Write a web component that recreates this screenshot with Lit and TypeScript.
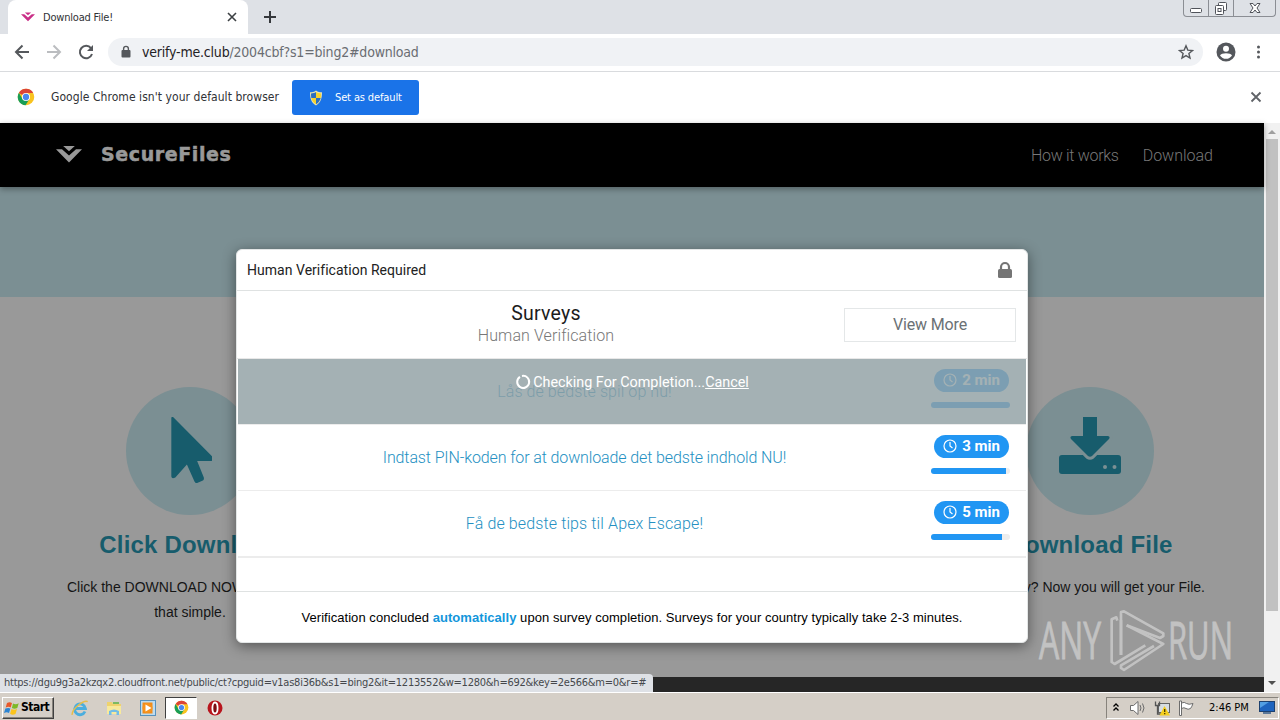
import { css, html, LitElement, svg } from "lit";
import { customElement, property } from "lit/decorators.js";

const chromeLogo = svg`
  <circle cx="12" cy="12" r="11" fill="#f9c31f" />
  <path d="M12 12 2.5 6.5A11 11 0 0 1 21.6 6.6H12Z" fill="#dc4437" />
  <path d="M2.5 6.4A11 11 0 0 0 11.4 23L16.6 14.6 12 12 7.3 14.6Z" fill="#189e57" />
  <circle cx="12" cy="12" r="5.4" fill="#fff" />
  <circle cx="12" cy="12" r="4.2" fill="#4a87ee" />
`;

const secureLogo = svg`
  <path d="M0 3.2h6l7 6.4 7-6.4h6L13 16.4Z" />
  <path d="M7.2 0h11.6L13 5.2Z" />
`;

@customElement("browser-chrome")
export class BrowserChrome extends LitElement {
  static styles = css`
    :host {
      display: block;
      font-family: "DejaVu Sans Condensed", "DejaVu Sans", sans-serif;
      font-stretch: condensed;
      color: #303236;
      white-space: nowrap;
    }

    svg {
      display: block;
      flex: none;
    }

    .tabs {
      height: 34px;
      background: #dee1e6;
      display: flex;
      align-items: flex-start;
    }

    .tab {
      box-sizing: border-box;
      width: 240px;
      height: 34px;
      margin-left: 8px;
      padding: 0 10px 0 13px;
      border-radius: 8px 8px 0 0;
      background: #fff;
      display: flex;
      align-items: center;
      font-size: 11px;
    }

    .tab-title {
      flex: 1;
      margin-left: 8px;
      letter-spacing: -0.2px;
    }

    .plus {
      margin: 10px 0 0 15px;
    }

    .window-buttons {
      box-sizing: border-box;
      width: 93px;
      height: 17px;
      margin: 0 4px 0 auto;
      border: 1px solid #8b8e94;
      border-top: 0;
      border-radius: 0 0 4px 4px;
      display: flex;
    }

    .window-buttons span {
      width: 24px;
      border-right: 1px solid #8b8e94;
      display: flex;
      justify-content: center;
    }

    .window-buttons span:last-child {
      flex: 1;
      border: 0;
    }

    .toolbar {
      box-sizing: border-box;
      height: 38px;
      padding: 0 11px 1px 14px;
      border-bottom: 1px solid #d9dbde;
      background: #fff;
      display: flex;
      align-items: center;
    }

    .nav {
      display: flex;
      gap: 16px;
    }

    .address {
      box-sizing: border-box;
      width: 1095px;
      height: 28px;
      margin-left: 14px;
      padding: 0 9px 0 12px;
      border-radius: 14px;
      background: #f0f2f5;
      display: flex;
      align-items: center;
      font-size: 14px;
    }

    .url {
      flex: 1;
      margin-left: 10px;
      color: #6a6d72;
      letter-spacing: -0.2px;
    }

    .url b {
      font-weight: normal;
      color: #1f2124;
    }

    .profile {
      margin-left: 13px;
    }

    .dots {
      margin-left: 12px;
    }

    .infobar {
      box-sizing: border-box;
      height: 51px;
      padding: 0 16px 0 17px;
      background: #fff;
      display: flex;
      align-items: center;
      font-size: 12px;
    }

    .infobar > svg {
      margin-bottom: 2px;
    }

    .message {
      margin-left: 16px;
      padding-bottom: 2px;
      width: 241px;
      letter-spacing: 0.06px;
    }

    .set-default {
      box-sizing: border-box;
      width: 127px;
      height: 35px;
      padding-left: 16px;
      border-radius: 3px;
      background: #1a73e8;
      color: #fff;
      font-size: 11px;
      letter-spacing: -0.13px;
      display: flex;
      align-items: center;
      gap: 11px;
    }

    .dismiss {
      margin-left: auto;
    }
  `;

  render() {
    return html`
      <div class="tabs">
        <div class="tab">
          <svg width="14" height="10" viewBox="0 0 26 17" fill="#c92f87">${secureLogo}</svg>
          <span class="tab-title">Download File!</span>
          <svg width="12" height="12" viewBox="0 0 12 12" stroke="#3c4043" stroke-width="1.6">
            <path d="M2 2l8 8M10 2l-8 8" />
          </svg>
        </div>
        <svg class="plus" width="14" height="14" viewBox="0 0 14 14" stroke="#35383c" stroke-width="2">
          <path d="M7 1v12M1 7h12" />
        </svg>
        <div class="window-buttons">
          <span>
            <svg width="14" height="16" viewBox="0 0 14 16" fill="#fff" stroke="#50535a">
              <rect x="1.5" y="8.5" width="11" height="4" rx="1" />
            </svg>
          </span>
          <span>
            <svg width="14" height="16" viewBox="0 0 14 16" fill="#fff" stroke="#50535a">
              <rect x="4.5" y="2.5" width="8" height="8" rx="1" />
              <rect x="1.5" y="5.5" width="8" height="9" rx="1" />
              <rect x="4" y="8.5" width="3" height="3" />
            </svg>
          </span>
          <span>
            <svg width="14" height="16" viewBox="0 0 14 16" fill="#fff" stroke="#50535a">
              <path d="M2 3.5h3l2 2.500 2-2.500h3L9 8l3 4.500H9L7 10l-2 2.500H2L5 8Z" />
            </svg>
          </span>
        </div>
      </div>

      <div class="toolbar">
        <div class="nav">
          <svg width="16" height="16" viewBox="0 0 16 16" fill="none" stroke="#55585c" stroke-width="2">
            <path d="M15 8H2M8.500 1.500 2 8l6.500 6.500" />
          </svg>
          <svg width="16" height="16" viewBox="0 0 16 16" fill="none" stroke="#bbbdc0" stroke-width="2">
            <path d="M1 8h13M7.500 1.500 14 8l-6.500 6.500" />
          </svg>
          <svg width="16" height="16" viewBox="0 0 16 16">
            <path d="M13 4.200A6.200 6.200 0 1 0 14 10" fill="none" stroke="#55585c" stroke-width="2" />
            <path d="M15 1v6H9Z" fill="#55585c" />
          </svg>
        </div>
        <div class="address">
          <svg width="12" height="14" viewBox="0 0 12 14">
            <rect x="1.500" y="5" width="9" height="7.500" rx="1" fill="#55585c" />
            <path d="M3.600 6V3.800a2.400 2.400 0 0 1 4.800 0V6" fill="none" stroke="#55585c" stroke-width="1.400" />
          </svg>
          <span class="url"><b>verify-me.club</b>/2004cbf?s1=bing2#download</span>
          <svg width="16" height="16" viewBox="0 0 16 16" fill="none" stroke="#55585c" stroke-width="1.400">
            <path d="M8 1.800l1.800 4.300 4.700.4-3.600 3 1.100 4.600L8 11.600l-4 2.500 1.100-4.600-3.600-3 4.700-.4Z" />
          </svg>
        </div>
        <svg class="profile" width="20" height="20" viewBox="0 0 20 20">
          <circle cx="10" cy="10" r="9.500" fill="#54575c" />
          <circle cx="10" cy="6.800" r="3" fill="#fff" />
          <path d="M4 13.600c1.300-3.200 10.700-3.200 12 0a7.200 7.200 0 0 1-12 0Z" fill="#fff" />
        </svg>
        <svg class="dots" width="20" height="16" viewBox="0 0 20 16" fill="#55585c">
          <circle cx="10.500" cy="3" r="1.500" />
          <circle cx="10.500" cy="8" r="1.500" />
          <circle cx="10.500" cy="13" r="1.500" />
        </svg>
      </div>

      <div class="infobar">
        <svg width="18" height="18" viewBox="0 0 24 24">${chromeLogo}</svg>
        <span class="message">Google Chrome isn't your default browser</span>
        <div class="set-default">
          <svg width="16" height="16" viewBox="0 0 16 16">
            <path d="M8 .5c2 1.500 4 1.800 6 1.800 0 6-1.200 10.500-6 13.200C3.200 12.800 2 8.300 2 2.300c2 0 4-.3 6-1.800Z" fill="#e9e3b0" />
            <path d="M8 2v6H3.300C3 6.500 3 5 3 3.400 5 3.300 6.500 3 8 2Z" fill="#2d6fc0" />
            <path d="M8 2v6h4.700c.3-1.500.3-3 .3-4.600C11 3.300 9.500 3 8 2Z" fill="#f7d32e" />
            <path d="M8 8v6.300C5.300 12.700 3.900 10.600 3.300 8Z" fill="#f7d32e" />
            <path d="M8 8v6.300c2.700-1.600 4.100-3.700 4.700-6.300Z" fill="#2d6fc0" />
          </svg>
          <span>Set as default</span>
        </div>
        <svg class="dismiss" width="16" height="16" viewBox="0 0 16 16" stroke="#606368" stroke-width="1.800">
          <path d="M3.500 3.500l9 9M12.500 3.500l-9 9" />
        </svg>
      </div>
    `;
  }
}

@customElement("offer-row")
export class OfferRow extends LitElement {
  @property() label = "";
  @property({ type: Number }) tracking = 0;
  @property({ type: Number }) minutes = 0;
  @property({ type: Number }) progress = 100;
  @property({ type: Boolean }) checking = false;

  static styles = css`
    :host {
      box-sizing: border-box;
      position: relative;
      height: 66px;
      padding: 10px 16px 0 0;
      border-bottom: 1px solid #ececec;
      display: flex;
      color: #2490c2;
    }

    :host(:last-child) {
      height: 67px;
      border-bottom-width: 2px;
    }

    .label {
      flex: 1;
      padding-top: 13px;
      text-align: center;
      font-size: 16px;
      line-height: 20px;
      font-weight: 300;
      white-space: nowrap;
    }

    .time {
      width: 79px;
      display: flex;
      flex-direction: column;
      align-items: center;
      gap: 10px;
    }

    .badge {
      width: 75px;
      height: 23px;
      border-radius: 12px;
      background: #2196f3;
      color: #fff;
      font-size: 15px;
      line-height: 20px;
      font-weight: 700;
      display: flex;
      align-items: center;
      justify-content: center;
      gap: 5px;
      margin-left: 2px;
      white-space: nowrap;
    }

    .badge span {
      padding-bottom: 2px;
    }

    .badge svg {
      margin-bottom: 2px;
    }

    .track {
      width: 79px;
      height: 6px;
      border-radius: 3px;
      background: #ededed;
      overflow: hidden;
    }

    .bar {
      height: 6px;
      background: #2196f3;
    }

    .overlay {
      position: absolute;
      inset: 0;
      background: rgba(144, 160, 163, 0.82);
      color: #fff;
      font-size: 14.4px;
      line-height: 18px;
      letter-spacing: -0.02px;
      padding-top: 15px;
      display: flex;
      justify-content: center;
      gap: 2px;
      white-space: nowrap;
    }

    .overlay svg {
      margin-top: -1px;
    }

    .overlay u {
      text-underline-offset: 1px;
    }
  `;

  render() {
    return html`
      <div class="label" style="letter-spacing: ${this.tracking}px">${this.label}</div>
      <div class="time">
        <div class="badge">
          <svg width="14" height="14" viewBox="0 0 14 14" fill="none" stroke="#fff" stroke-width="1.200">
            <circle cx="7" cy="7" r="6" />
            <path d="M7 3v4l2.500 2" />
          </svg>
          <span>${this.minutes} min</span>
        </div>
        <div class="track">
          <div class="bar" style="width: ${this.progress}%"></div>
        </div>
      </div>
      ${this.checking
        ? html`
            <div class="overlay">
              <svg width="16" height="18" viewBox="0 0 16 18" fill="none" stroke="#fff" stroke-width="2">
                <path d="M5 3.800A6 6 0 1 0 7 3" />
              </svg>
              <span>Checking For Completion...<u>Cancel</u></span>
            </div>
          `
        : ""}
    `;
  }
}

@customElement("verify-modal")
export class VerifyModal extends LitElement {
  static styles = css`
    :host {
      box-sizing: border-box;
      width: 792px;
      height: 394px;
      border: 1px solid #e3e6e6;
      border-radius: 6px;
      background: #fff;
      box-shadow: 0 3px 14px rgba(0, 0, 0, 0.45);
      font-family: Roboto, "Liberation Sans", sans-serif;
      color: #222;
      display: flex;
      flex-direction: column;
      white-space: nowrap;
    }

    .title {
      height: 40px;
      padding: 0 14px 0 10px;
      border-bottom: 1px solid #dfe2e2;
      display: flex;
      align-items: center;
      justify-content: space-between;
      font-size: 14px;
      letter-spacing: 0.03px;
    }

    .intro {
      box-sizing: border-box;
      height: 68px;
      padding: 12px 11px 0 0;
      border-bottom: 1px solid #e8e8e8;
      display: flex;
    }

    .heading {
      flex: 1;
      padding-left: 11px;
      text-align: center;
    }

    .heading h2 {
      margin: 0;
      font-size: 19.5px;
      line-height: 22px;
      font-weight: 400;
      letter-spacing: 0.2px;
      color: #1c1c1c;
    }

    .heading p {
      margin: 0;
      font-size: 16px;
      line-height: 22px;
      font-weight: 300;
      letter-spacing: 0.1px;
      color: #777;
    }

    .more {
      box-sizing: border-box;
      width: 172px;
      height: 34px;
      margin-top: 5px;
      border: 1px solid #e4e7e8;
      color: #6b7175;
      font-size: 16px;
      line-height: 31px;
      letter-spacing: -0.15px;
      text-align: center;
    }

    .offers {
      height: 233px;
      box-sizing: border-box;
      padding: 0 1px;
      border-bottom: 1px solid #dfe2e2;
    }

    .footer {
      flex: 1;
      display: flex;
      align-items: center;
      justify-content: center;
      font-family: "Liberation Sans", sans-serif;
      font-size: 13px;
      letter-spacing: 0.05px;
      color: #000;
    }

    .footer b {
      color: #1296db;
    }
  `;

  render() {
    return html`
      <div class="title">
        <span>Human Verification Required</span>
        <svg width="16" height="18" viewBox="0 0 16 18">
          <rect x="1" y="8" width="14" height="9" rx="1.500" fill="#757575" />
          <path d="M4 9V6a4 4 0 0 1 8 0v3" fill="none" stroke="#757575" stroke-width="2.200" />
        </svg>
      </div>
      <div class="intro">
        <div class="heading">
          <h2>Surveys</h2>
          <p>Human Verification</p>
        </div>
        <div class="more">View More</div>
      </div>
      <div class="offers">
        <offer-row label="Lås de bedste spil op nu!" tracking="0.08" minutes="2" progress="100" checking></offer-row>
        <offer-row
          label="Indtast PIN-koden for at downloade det bedste indhold NU!"
          tracking="-0.12"
          minutes="3"
          progress="95"
        ></offer-row>
        <offer-row label="Få de bedste tips til Apex Escape!" tracking="0.12" minutes="5" progress="90"></offer-row>
      </div>
      <div class="footer">
        <span>
          Verification concluded <b>automatically</b> upon survey completion. Surveys for your
          country typically take 2-3 minutes.
        </span>
      </div>
    `;
  }
}

@customElement("win-taskbar")
export class WinTaskbar extends LitElement {
  static styles = css`
    :host {
      box-sizing: border-box;
      height: 28px;
      padding: 3px 1px 1px 2px;
      border-top: 1px solid #fff;
      background: #d5cfc7;
      display: flex;
      align-items: center;
      font-family: "DejaVu Sans Condensed", "DejaVu Sans", sans-serif;
      font-stretch: condensed;
      font-size: 11px;
      color: #000;
      white-space: nowrap;
    }

    .start {
      box-sizing: border-box;
      width: 52px;
      height: 22px;
      padding-left: 1px;
      border: 1px solid;
      border-color: #fff #404040 #404040 #fff;
      box-shadow: inset -1px -1px #87837c;
      display: flex;
      align-items: center;
      font-weight: bold;
      font-size: 12px;
    }

    .start span {
      letter-spacing: -0.5px;
      line-height: 18px;
      padding: 0 0 1px 1px;
    }

    .apps {
      margin-left: 16px;
      display: flex;
      align-items: center;
    }

    .app {
      width: 20px;
      margin-right: 14px;
      display: flex;
      justify-content: center;
    }

    .active {
      box-sizing: border-box;
      width: 32px;
      height: 22px;
      margin: 0 8px 0 -7px;
      border: 1px solid;
      border-color: #404040 #fff #fff #404040;
      background: #fff;
      display: flex;
      align-items: center;
      justify-content: center;
    }

    .tray {
      box-sizing: border-box;
      width: 173px;
      height: 22px;
      margin-left: auto;
      padding: 0 3px 0 4px;
      border: 1px solid;
      border-color: #87837c #fff #fff #87837c;
      display: flex;
      align-items: center;
    }

    .tray svg {
      flex: none;
      margin-right: 7.5px;
    }

    .clock {
      margin-left: 8px;
      flex: 1;
    }

    .tray svg.desktop {
      margin-right: 0;
    }
  `;

  render() {
    return html`
      <div class="start">
        <svg width="16" height="16" viewBox="0 0 16 16">
          <path d="M3 3c2-1.300 3.500-1 5 0L6.700 7.500c-1.500-.9-3-.9-5 0Z" fill="#e8592b" />
          <path d="M9 3.500c1.700.9 3.500.9 5.700-.2L13.300 8c-2 1-3.800.9-5.400 0Z" fill="#7db928" />
          <path d="M1.400 8.600c2-.9 3.500-.9 5 0L5 13c-1.500-.9-3-.9-5 0Z" fill="#2b84d3" />
          <path d="M7.500 9.100c1.700.9 3.500.9 5.500 0L11.500 14c-2 .9-3.700.9-5.400-.3Z" fill="#fbc41c" />
        </svg>
        <span>Start</span>
      </div>
      <div class="apps">
        <div class="app">
          <svg width="18" height="18" viewBox="0 0 18 18" fill="none">
            <path d="M14 12.500A5.400 5.400 0 1 1 14.400 9.500H5" stroke="#4baede" stroke-width="2.800" />
            <path d="M1.200 15.800C.5 10 13 .5 16.700 2.700" stroke="#e7bd49" stroke-width="1.500" />
          </svg>
        </div>
        <div class="app">
          <svg width="18" height="18" viewBox="0 0 18 18">
            <path d="M2 3h5l1 2h8v6H2Z" fill="#efd36d" />
            <path d="M2 7h14v8H2Z" fill="#f8e99c" />
            <path d="M4 16v-4q5-3 10 0v4h-2.500v-3h-5v3Z" fill="#72bde6" />
            <path d="M8 3h6v2H8Z" fill="#7cba62" />
          </svg>
        </div>
        <div class="app">
          <svg width="18" height="18" viewBox="0 0 18 18">
            <rect x="1.500" y="1.500" width="15" height="15" fill="#bcdcf1" stroke="#5792bd" />
            <rect x="3.500" y="3.500" width="10" height="11" fill="#f28b18" />
            <circle cx="8.500" cy="9" r="5" fill="#f5931f" />
            <path d="M6.500 5.500v7l6-3.500Z" fill="#fff" />
          </svg>
        </div>
        <div class="active">
          <svg width="15" height="15" viewBox="0 0 24 24">${chromeLogo}</svg>
        </div>
        <div class="app">
          <svg width="16" height="16" viewBox="0 0 16 16">
            <circle cx="8" cy="8" r="7.500" fill="#b8151d" />
            <ellipse cx="8" cy="8" rx="2.600" ry="5.500" fill="#7e0c12" stroke="#fff" stroke-width="1.800" />
          </svg>
        </div>
      </div>
      <div class="tray">
        <svg width="10" height="12" viewBox="0 0 10 12" fill="none" stroke="#000" stroke-width="1.300">
          <path d="M2.500 4.500 5 2l2.500 2.500M2.500 8.500 5 6l2.500 2.500" />
        </svg>
        <svg width="18" height="16" viewBox="0 0 18 16" fill="#fff" stroke="#6c6c6c">
          <path d="M1.500 5.500h3L9 1.500v13l-4.500-4h-3Z" />
          <path d="M11 5q2 3 0 6M13.500 3.500q3 4.500 0 9" fill="none" />
        </svg>
        <svg width="16" height="16" viewBox="0 0 16 16">
          <rect x="4.500" y="3.500" width="11" height="9" fill="#d7dde2" stroke="#636363" />
          <path d="M1.500 1.500v4h4v-4M3.500 5v9h5" fill="none" stroke="#555" stroke-width="1.300" />
          <path d="M10.500 6 16 15.500H5.500Z" fill="#f5ce1c" />
          <path d="M10.700 9v3M10.700 13v1.300" stroke="#433500" stroke-width="1.300" />
        </svg>
        <svg width="16" height="16" viewBox="0 0 16 16" fill="#fff" stroke="#6c6c6c">
          <path d="M1.500 1v14.500h2V1ZM3.500 3q3-1.500 5 .5 2 1.500 6.500 0-1 3-2.500 5-2.500 1.500-4.500 0t-4.500 0" />
        </svg>
        <span class="clock">2:46 PM</span>
        <svg class="desktop" width="16" height="15" viewBox="0 0 16 15">
          <rect x=".5" y="1.500" width="15" height="10" fill="#1e64be" stroke="#1d416f" />
          <path d="M1 2h9L1 8Z" fill="#529fe3" />
          <path d="M4 12h8v2H4Z" fill="#5c7899" />
        </svg>
      </div>
    `;
  }
}

@customElement("app-root")
export class AppRoot extends LitElement {
  static styles = css`
    :host {
      position: relative;
      display: flex;
      flex-direction: column;
      width: 1280px;
      height: 720px;
      overflow: hidden;
      background: #fff;
      font-family: "Liberation Sans", Arial, sans-serif;
    }

    .viewport {
      height: 569px;
      display: flex;
    }

    .page {
      width: 1264px;
      background: #999;
      display: flex;
      flex-direction: column;
      white-space: nowrap;
    }

    .header {
      box-sizing: border-box;
      height: 64px;
      padding: 0 51px 0 56px;
      background: #000;
      box-shadow: 0 2px 6px rgba(0, 0, 0, 0.35);
      display: flex;
      align-items: center;
      color: #787878;
      font-family: Roboto, sans-serif;
      font-weight: 300;
      font-size: 16px;
      z-index: 1;
    }

    .header svg {
      margin-bottom: 2px;
    }

    .brand {
      flex: 1;
      margin-left: 19px;
      padding-bottom: 2px;
      color: #999;
      font-family: "DejaVu Sans", sans-serif;
      font-weight: 700;
      font-size: 19px;
      letter-spacing: 0.6px;
      -webkit-text-stroke: 0.5px #999;
    }

    .links {
      display: flex;
      gap: 24px;
    }

    .links span:first-child {
      letter-spacing: -0.3px;
    }

    .hero {
      height: 110px;
      background: #7b8f93;
    }

    .steps {
      flex: 1;
      padding: 90px 59px 0 67px;
      display: flex;
      justify-content: space-between;
    }

    .step {
      width: 246px;
      display: flex;
      flex-direction: column;
      align-items: center;
      color: #151515;
      font-size: 14px;
      line-height: 25px;
    }

    .step:last-child {
      width: 230px;
    }

    .disc {
      width: 128px;
      height: 128px;
      border-radius: 50%;
      background: #7b8f93;
      display: flex;
      align-items: center;
      justify-content: center;
    }

    .step h3 {
      margin: 15px 0;
      color: #175c6c;
      font-size: 24px;
      line-height: 30px;
      letter-spacing: 0.2px;
    }

    .first-line {
      align-self: flex-start;
    }

    .last-line {
      align-self: flex-end;
    }

    .page-footer {
      height: 15px;
      background: #262626;
    }

    .scrollbar {
      width: 16px;
      background: #f1f1f1;
      display: flex;
      flex-direction: column;
      align-items: center;
    }

    .thumb {
      width: 12px;
      height: 472px;
      margin-bottom: auto;
      background: #c1c1c1;
    }

    .modal {
      position: absolute;
      left: 236px;
      top: 249px;
    }

    .status {
      position: absolute;
      left: 0;
      top: 674px;
      box-sizing: border-box;
      width: 653px;
      height: 18px;
      padding-left: 4px;
      border-radius: 0 4px 0 0;
      background: #dee1e6;
      color: #45484c;
      font-family: "DejaVu Sans Condensed", "DejaVu Sans", sans-serif;
      font-stretch: condensed;
      font-size: 11px;
      line-height: 18px;
      letter-spacing: -0.235px;
      white-space: nowrap;
    }

    .watermark {
      position: absolute;
      left: 1036px;
      top: 598px;
      opacity: 0.62;
    }

    .watermark text {
      font-family: "Open Sans", sans-serif;
      font-weight: 400;
      font-size: 52px;
    }
  `;

  render() {
    return html`
      <browser-chrome></browser-chrome>

      <div class="viewport">
        <div class="page">
          <div class="header">
            <svg width="26" height="17" viewBox="0 0 26 17" fill="#999">${secureLogo}</svg>
            <span class="brand">SecureFiles</span>
            <div class="links">
              <span>How it works</span>
              <span>Download</span>
            </div>
          </div>
          <div class="hero"></div>
          <div class="steps">
            <div class="step">
              <div class="disc">
                <svg width="44" height="68" viewBox="0 0 44 68" fill="#175c6c">
                  <path
                    d="M4 1.500 48 41q2.500 3-2 4H30.500l7.500 16.500q.5 2-1 3l-6.500 2.500q-2 .5-3-1.500L19 48.500 6 61.500q-4 2-4.500-1V2q.5-2.500 2.500-.5Z"
                    transform="translate(2 -1) scale(.89 1)"
                  />
                </svg>
              </div>
              <h3>Click Download</h3>
              <span class="first-line">Click the DOWNLOAD NOW</span>
              <span>that simple.</span>
            </div>
            <div class="step">
              <div class="disc">
                <svg width="62" height="68" viewBox="0 5 62 68" fill="#175c6c">
                  <path d="M3 43h56q3 0 3 3v13q0 3-3 3H3q-3 0-3-3V46q0-3 3-3Z" />
                  <path
                    d="M24 5h14v19h11q2.500.5 1 3L33 44q-2 1.500-4 0L12 27q-1.500-2.500 1-3h11Z"
                    stroke="#7b8f93"
                    stroke-width="6"
                    paint-order="stroke"
                  />
                  <circle cx="46" cy="55" r="2" fill="#7b8f93" />
                  <circle cx="55.500" cy="55" r="2" fill="#7b8f93" />
                </svg>
              </div>
              <h3>Download File</h3>
              <span class="last-line">y? Now you will get your File.</span>
            </div>
          </div>
          <div class="page-footer"></div>
        </div>
        <div class="scrollbar">
          <svg width="16" height="16" viewBox="0 0 16 16" fill="#a0a0a0"><path d="M4 11l4-4 4 4Z" /></svg>
          <div class="thumb"></div>
          <svg width="16" height="17" viewBox="0 0 16 17" fill="#505050"><path d="M4 6l4 4 4-4Z" /></svg>
        </div>
      </div>

      <win-taskbar></win-taskbar>

      <verify-modal class="modal"></verify-modal>

      <div class="status">
        https://dgu9g3a2kzqx2.cloudfront.net/public/ct?cpguid=v1as8i36b&amp;s1=bing2&amp;it=1213552&amp;w=1280&amp;h=692&amp;key=2e566&amp;m=0&amp;r=#
      </div>

      <svg class="watermark" width="224" height="84" viewBox="0 -10 224 84" fill="#dcdcdc">
        <g stroke="#dcdcdc" stroke-width="0.9">
          <text x="3" y="51" textLength="62" lengthAdjust="spacingAndGlyphs">ANY</text>
          <text x="132" y="51" textLength="65" lengthAdjust="spacingAndGlyphs">RUN</text>
        </g>
        <g
          transform="translate(-16 -8) scale(.3333)"
          fill="none"
          stroke="#dcdcdc"
          stroke-width="8"
          stroke-linejoin="round"
        >
          <path d="M303 165V36L312 34 430 100V108L420 114 320 76" />
          <path d="M320 76 430 132 312 210 303 204V196L402 138" />
          <path d="M292 62 289 52 275 58V186L284 192 376 136M303 60V165" />
        </g>
      </svg>
    `;
  }
}
